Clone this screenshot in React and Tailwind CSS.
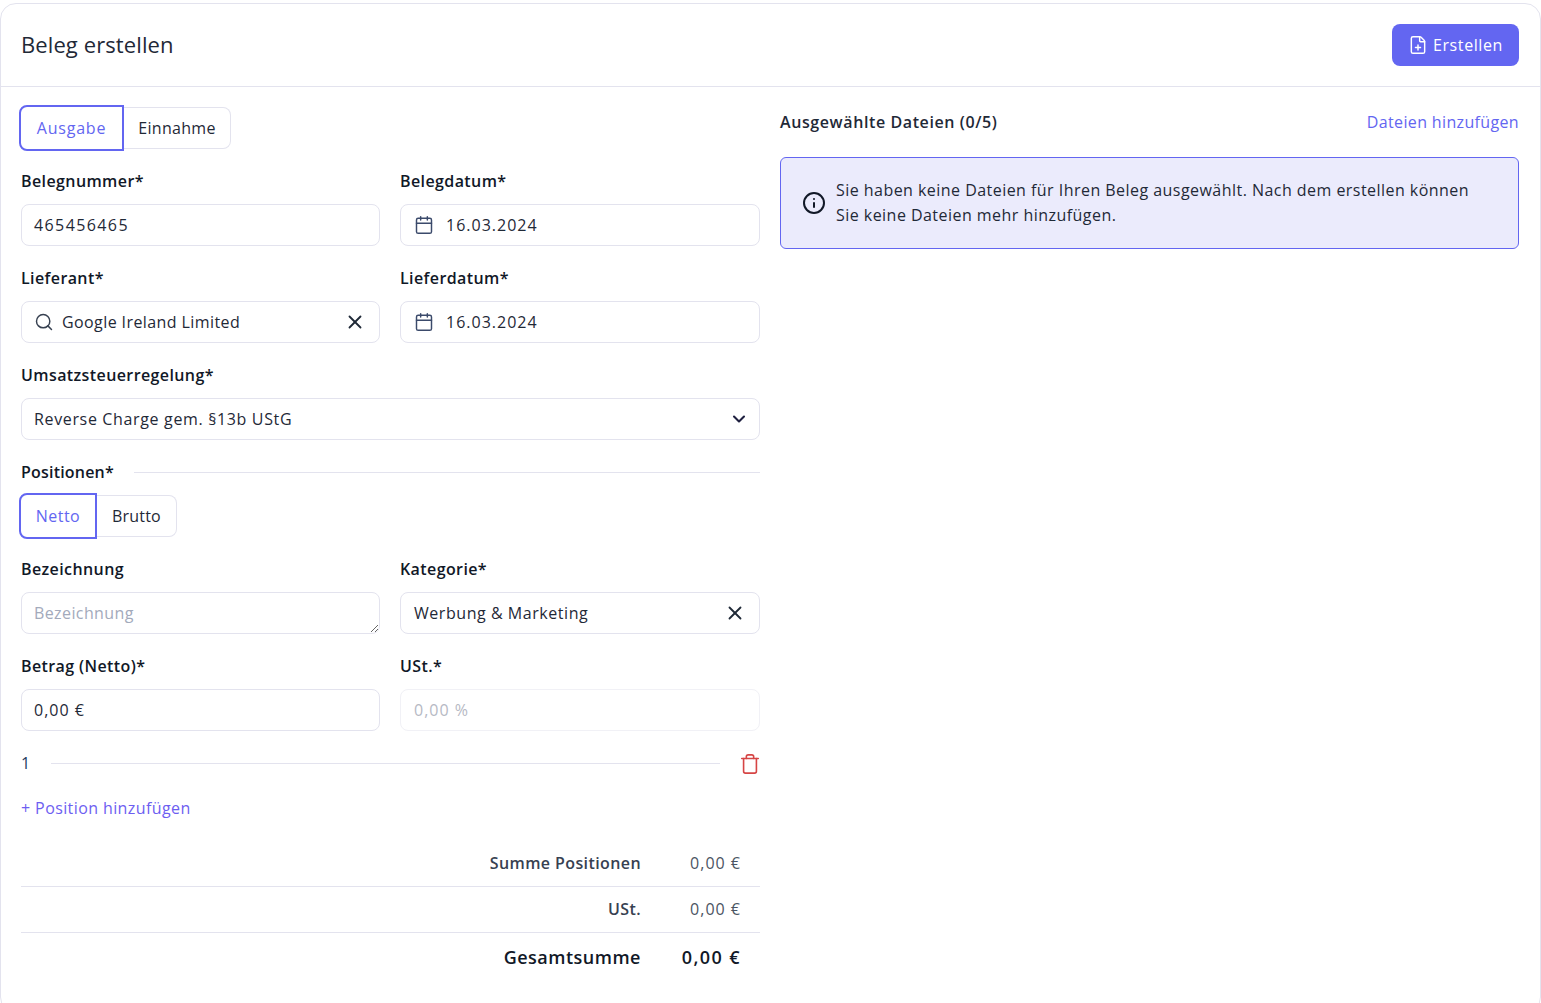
import { Calendar, ChevronDown, FilePlus, Info, Search, Trash, X } from 'lucide-react'

const inputBox = 'flex h-[42px] w-full items-center rounded-lg border border-[#e3e3ee] bg-white px-3 text-base text-[#1f2937]'

const Label = ({ children }) => (
  <label className="mb-[11px] block h-6 text-base leading-6 font-semibold tracking-[0.4px] text-[#111827]">{children}</label>
)

const Field = ({ label, children }) => (
  <div>
    <Label>{label}</Label>
    {children}
  </div>
)

const DateInput = ({ value }) => (
  <div className={inputBox}>
    <Calendar className="ml-[1px] mr-[12px] h-5 w-5 text-[#3b4a6b]" strokeWidth={1.75} />
    <span className="tracking-[1px]">{value}</span>
  </div>
)

const ToggleGroup = ({ active, other, activeWidth, otherWidth, activeTrack, otherTrack }) => (
  <div className="flex h-[42px] w-fit">
    <button
      type="button"
      className={`relative z-10 -my-0.5 -ml-0.5 h-[46px] rounded-l-lg border-2 border-[#6366f1] bg-white text-base text-[#6366f1] ${activeTrack}`}
      style={{ width: activeWidth }}
    >
      {active}
    </button>
    <button
      type="button"
      className={`h-[42px] rounded-r-lg border border-l-0 border-[#e3e3ee] bg-white text-base text-[#1f2937] ${otherTrack}`}
      style={{ width: otherWidth }}
    >
      {other}
    </button>
  </div>
)

const SummaryRow = ({ label, value, border, strong }) => (
  <div className={`flex items-center justify-end pb-[2px] ${border ? 'border-b border-[#e3e3ee]' : ''} ${strong ? 'h-[50px] text-lg font-semibold text-[#111827]' : 'h-[46px] text-base text-[#374151]'}`}>
    <span className={strong ? 'tracking-[0.5px]' : 'font-semibold tracking-[0.4px]'}>{label}</span>
    <span className={`mr-[19px] w-[100px] text-right ${strong ? 'tracking-[1.4px]' : 'tracking-[1px] text-[#4b5563]'}`}>{value}</span>
  </div>
)

export default function App() {
  return (
    <div className="h-[1003px] overflow-hidden bg-white pt-[3px] font-['Open_Sans','Noto_Sans',sans-serif] tracking-[0.55px]">
      <div className="h-[1010px] rounded-2xl border border-[#e3e3ee] bg-white">
        <header className="flex h-[83px] items-center justify-between border-b border-[#e3e3ee] pr-[21px] pl-5">
          <h1 className="pb-[2px] text-[22px] tracking-[0.1px] text-[#1f2937]">Beleg erstellen</h1>
          <button type="button" className="flex h-[42px] w-[127px] items-center justify-center gap-[5px] rounded-lg bg-[#6366f1] text-base tracking-[0.6px] text-white">
            <FilePlus className="h-5 w-5" strokeWidth={1.75} />
            Erstellen
          </button>
        </header>

        <div className="grid grid-cols-[739px_1fr] gap-5 px-5 pt-5 pr-[21px]">
          <div>
            <ToggleGroup active="Ausgabe" other="Einnahme" activeWidth={105} otherWidth={107} activeTrack="tracking-[0.8px]" otherTrack="tracking-[0.3px]" />

            <div className="mt-5 grid grid-cols-[359px_1fr] gap-x-5 gap-y-5">
              <Field label="Belegnummer*">
                <div className={`${inputBox} tracking-[1.4px]`}>465456465</div>
              </Field>
              <Field label="Belegdatum*">
                <DateInput value="16.03.2024" />
              </Field>
              <Field label="Lieferant*">
                <div className={inputBox}>
                  <Search className="mr-[8px] h-5 w-5 text-[#374151]" strokeWidth={1.75} />
                  <span className="flex-1 tracking-[0.41px]">Google Ireland Limited</span>
                  <X className="mr-px h-[22px] w-[22px] text-[#1f2937]" strokeWidth={2} />
                </div>
              </Field>
              <Field label="Lieferdatum*">
                <DateInput value="16.03.2024" />
              </Field>
              <div className="col-span-2">
                <Label>Umsatzsteuerregelung*</Label>
                <div className={`${inputBox} tracking-[0.65px]`}>
                  <span className="flex-1">Reverse Charge gem. §13b UStG</span>
                  <ChevronDown className="mr-[-2px] h-5 w-5 text-[#1f2040]" strokeWidth={2.5} />
                </div>
              </div>
            </div>

            <div className="mt-5 mb-[11px] flex h-6 items-center gap-5">
              <span className="text-base font-semibold tracking-[0.2px] text-[#111827]">Positionen*</span>
              <div className="h-px flex-1 bg-[#e3e3ee]" />
            </div>
            <ToggleGroup active="Netto" other="Brutto" activeWidth={78} otherWidth={80} activeTrack="tracking-[0.45px]" otherTrack="tracking-[0.2px]" />

            <div className="mt-5 grid grid-cols-[359px_1fr] gap-x-5 gap-y-5">
              <Field label="Bezeichnung">
                <textarea
                  rows={1}
                  placeholder="Bezeichnung"
                  className="block h-[42px] w-full rounded-lg border border-[#e3e3ee] bg-white px-3 py-2 text-base leading-6 tracking-[0.4px] outline-none placeholder:text-[#a3aabb]"
                />
              </Field>
              <Field label="Kategorie*">
                <div className={inputBox}>
                  <span className="ml-px flex-1">Werbung &amp; Marketing</span>
                  <X className="mr-px h-[22px] w-[22px] text-[#1f2937]" strokeWidth={2} />
                </div>
              </Field>
              <Field label="Betrag (Netto)*">
                <div className={`${inputBox} tracking-[1px]`}>0,00 €</div>
              </Field>
              <Field label="USt.*">
                <div className="flex h-[42px] items-center rounded-lg border border-[#f1f1f6] bg-white px-[13px] text-base tracking-[1px] text-[#b6b9c4]">0,00 %</div>
              </Field>
            </div>

            <div className="mt-5 flex h-6 items-center">
              <span className="w-[30px] text-base text-[#1f3a5f]">1</span>
              <div className="h-px flex-1 bg-[#e3e3ee]" />
              <Trash className="mt-[2px] mr-[-1px] ml-[19px] h-[22px] w-[22px] text-[#d64545]" strokeWidth={1.75} />
            </div>

            <div className="mt-[21px] h-6 text-base leading-6 tracking-[0.4px] text-[#6d5ef1]">+ Position hinzufügen</div>

            <div className="mt-[21px]">
              <SummaryRow label="Summe Positionen" value="0,00 €" border />
              <SummaryRow label="USt." value="0,00 €" border />
              <SummaryRow label="Gesamtsumme" value="0,00 €" strong />
            </div>
          </div>

          <div>
            <div className="flex h-[30px] items-center justify-between">
              <span className="text-base font-semibold tracking-[0.6px] text-[#1f2937]">Ausgewählte Dateien (0/5)</span>
              <span className="text-base tracking-[0.35px] text-[#6366f1]">Dateien hinzufügen</span>
            </div>
            <div className="mt-5 flex h-[92px] items-center rounded-md border border-[#6366f1] bg-[#ebebfc] pr-10 pl-[21px] text-base leading-[25px] tracking-[0.46px] text-[#1f2937]">
              <Info className="mr-[10px] h-6 w-6 shrink-0 text-[#111827]" strokeWidth={2} />
              <p>Sie haben keine Dateien für Ihren Beleg ausgewählt. Nach dem erstellen können Sie keine Dateien mehr hinzufügen.</p>
            </div>
          </div>
        </div>
      </div>
    </div>
  )
}
